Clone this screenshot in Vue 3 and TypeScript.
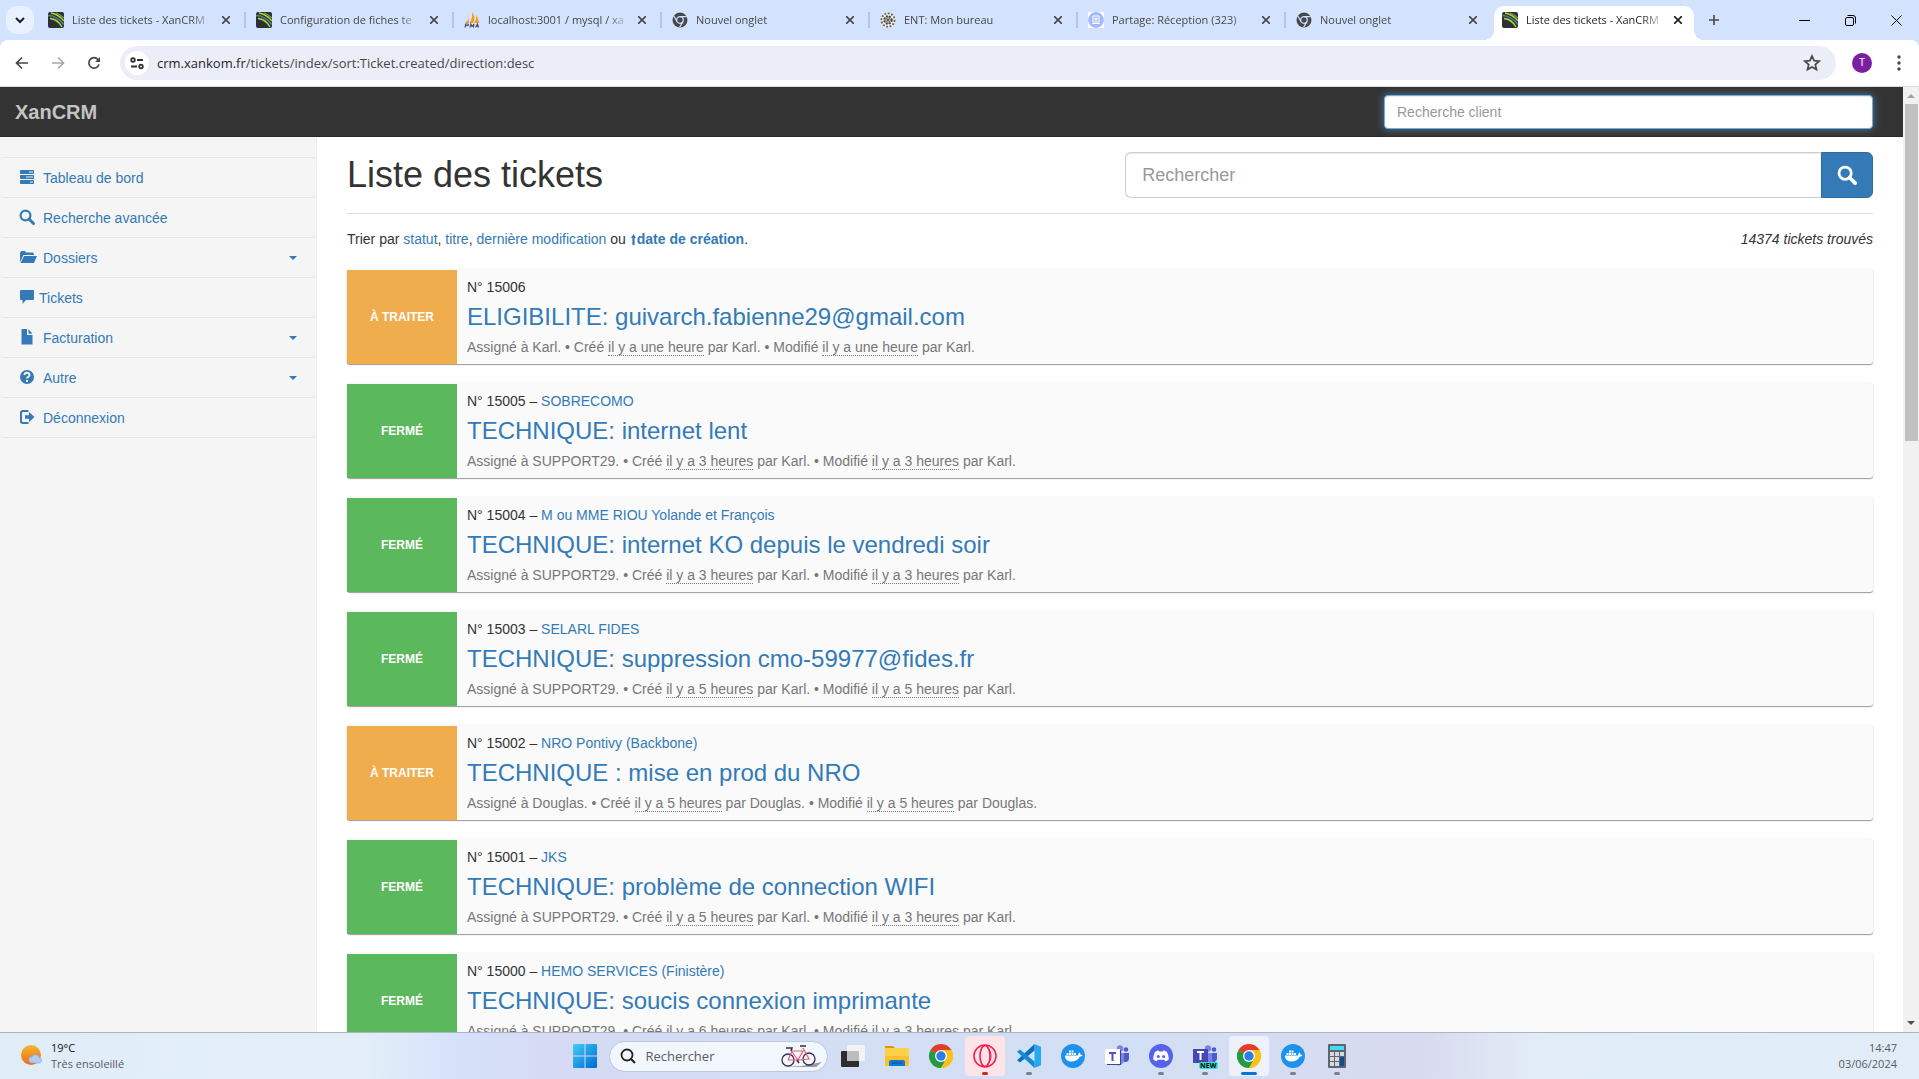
<script setup lang="ts">
import { ref } from 'vue'

interface Tab { title: string; icon: string; active?: boolean }
interface NavItem { label: string; icon: string; menu?: boolean; tight?: boolean }
interface Ticket {
  id: number
  open?: boolean
  client?: string
  title: string
  assignee: string
  author: string
  created: string
  modified: string
}
interface Task { name: string; icon: string; state?: 'run' | 'focus' | 'alert' }

const tabs: Tab[] = [
  { title: 'Liste des tickets - XanCRM', icon: 'xan' },
  { title: 'Configuration de fiches te', icon: 'xan' },
  { title: 'localhost:3001 / mysql / xa', icon: 'pma' },
  { title: 'Nouvel onglet', icon: 'chromeGrey' },
  { title: 'ENT: Mon bureau', icon: 'ent' },
  { title: 'Partage: Réception (323)', icon: 'share' },
  { title: 'Nouvel onglet', icon: 'chromeGrey' },
  { title: 'Liste des tickets - XanCRM', icon: 'xan', active: true },
]

const nav: NavItem[] = [
  { label: 'Tableau de bord', icon: 'tasks' },
  { label: 'Recherche avancée', icon: 'search' },
  { label: 'Dossiers', icon: 'folder', menu: true },
  { label: 'Tickets', icon: 'comment', tight: true },
  { label: 'Facturation', icon: 'file', menu: true },
  { label: 'Autre', icon: 'help', menu: true },
  { label: 'Déconnexion', icon: 'logout' },
]

const tickets: Ticket[] = [
  { id: 15006, open: true, title: 'ELIGIBILITE: guivarch.fabienne29@gmail.com', assignee: 'Karl', author: 'Karl', created: 'il y a une heure', modified: 'il y a une heure' },
  { id: 15005, client: 'SOBRECOMO', title: 'TECHNIQUE: internet lent', assignee: 'SUPPORT29', author: 'Karl', created: 'il y a 3 heures', modified: 'il y a 3 heures' },
  { id: 15004, client: 'M ou MME RIOU Yolande et François', title: 'TECHNIQUE: internet KO depuis le vendredi soir', assignee: 'SUPPORT29', author: 'Karl', created: 'il y a 3 heures', modified: 'il y a 3 heures' },
  { id: 15003, client: 'SELARL FIDES', title: 'TECHNIQUE: suppression cmo-59977@fides.fr', assignee: 'SUPPORT29', author: 'Karl', created: 'il y a 5 heures', modified: 'il y a 5 heures' },
  { id: 15002, open: true, client: 'NRO Pontivy (Backbone)', title: 'TECHNIQUE : mise en prod du NRO', assignee: 'Douglas', author: 'Douglas', created: 'il y a 5 heures', modified: 'il y a 5 heures' },
  { id: 15001, client: 'JKS', title: 'TECHNIQUE: problème de connection WIFI', assignee: 'SUPPORT29', author: 'Karl', created: 'il y a 5 heures', modified: 'il y a 3 heures' },
  { id: 15000, client: 'HEMO SERVICES (Finistère)', title: 'TECHNIQUE: soucis connexion imprimante', assignee: 'SUPPORT29', author: 'Karl', created: 'il y a 6 heures', modified: 'il y a 3 heures' },
]

const tasks: Task[] = [
  { name: 'Vue des tâches', icon: 'taskview' },
  { name: 'Explorateur', icon: 'explorer' },
  { name: 'Chrome', icon: 'chrome' },
  { name: 'Opera GX', icon: 'opera', state: 'alert' },
  { name: 'VS Code', icon: 'vscode', state: 'run' },
  { name: 'Docker', icon: 'docker' },
  { name: 'Teams', icon: 'teams' },
  { name: 'Discord', icon: 'discord', state: 'run' },
  { name: 'Teams (nouveau)', icon: 'teamsNew', state: 'run' },
  { name: 'Chrome', icon: 'chrome', state: 'focus' },
  { name: 'Docker Desktop', icon: 'docker', state: 'run' },
  { name: 'Calculatrice', icon: 'calc', state: 'run' },
]

const clientQuery = ref('')
const ticketQuery = ref('')
const url = { host: 'crm.xankom.fr', path: '/tickets/index/sort:Ticket.created/direction:desc' }

// Page and favicon glyphs: 16-unit grid. Taskbar glyphs: 24-unit grid.
const small: Record<string, string> = {
  xan: '<rect width="16" height="16" rx="2" fill="#2d3035"/><path d="M0 3.500c6 0 11 3 16 9" stroke="#3d8793" stroke-width="1.600" fill="none"/><path d="M3 1c5 1 9 3 13 8M2 6.500c5 .5 9 3 12 8.500" stroke="#c3d82f" stroke-width="1.300" fill="none"/><path d="M8 1c3 1 6 3 8 5" stroke="#6bab4c" stroke-width="1.200" fill="none"/>',
  pma: '<path d="M4 2c1 3 1 6-3 9h4zM8 0c3 4 3 8 1 11H5.500C8 8 8.500 4 8 0zM12 3c2 3 2 5 3.500 8H10c2-2 2.500-5 2-8z" fill="#f89c0e"/><path d="M1 15.500l.7-3.500h1.800c1.400 0 .9 1.800-.4 1.800H2M6 15.500l.8-3.500 1.200 2.500 2-2.500-.6 3.500M11.500 15.500l2-3.500 1 3.500M12.200 14.300h2" stroke="#49476e" fill="none" stroke-width="1.100"/>',
  chromeGrey: '<circle cx="8" cy="8" r="7.500" fill="#45484d"/><circle cx="8" cy="8" r="3.300" fill="none" stroke="#d3e3fd" stroke-width="1.200"/><path d="M8 4.700h6.700M5.100 9.600L1.900 4M10.900 9.600l-3.300 5.700" stroke="#d3e3fd" stroke-width="1.200"/>',
  ent: '<circle cx="8" cy="8" r="7.500" fill="#f4f4f2"/><circle cx="8" cy="8" r="6.600" fill="none" stroke="#6c6558" stroke-width="1.800" stroke-dasharray="2 1.400"/><circle cx="8" cy="8" r="3.700" fill="none" stroke="#3f3c38" stroke-width="2" stroke-dasharray="1.800 1.200"/><path d="M5.500 5.500l5 5M10.500 5.500l-5 5M8 4v8M4 8h8" stroke="#4c4740" stroke-width=".8"/>',
  share: '<rect width="16" height="16" fill="#fff"/><circle cx="8" cy="8" r="7.900" fill="#a3b7ff"/><path d="M5 4h6v6H5zM4 11.500h8M7 6h2v2H7z" fill="none" stroke="#fff"/>',
  tasks: '<path fill-rule="evenodd" d="M1.700 1h12.600a.7.7 0 0 1 .7.700v2.600a.7.7 0 0 1-.7.700H1.700a.7.7 0 0 1-.7-.7V1.700a.7.7 0 0 1 .7-.7zM10 2.400v1.200h4V2.400zM1.700 6h12.600a.7.7 0 0 1 .7.700v2.600a.7.7 0 0 1-.7.700H1.700a.7.7 0 0 1-.7-.7V6.700a.7.7 0 0 1 .7-.7zM7 7.400v1.200h7V7.400zM1.700 11h12.600a.7.7 0 0 1 .7.700v2.600a.7.7 0 0 1-.7.700H1.700a.7.7 0 0 1-.7-.7v-2.600a.7.7 0 0 1 .7-.7zM11 12.400v1.200h3v-1.200z"/>',
  search: '<circle cx="6.500" cy="6.500" r="4.900" fill="none" stroke="currentColor" stroke-width="2.200"/><path d="M10 10l4.500 4.500" stroke="currentColor" stroke-width="3" stroke-linecap="round"/>',
  folder: '<path d="M1 13V3.500L2.500 2H6l1.200 1.500H14L15 5v1H4.500z"/><path d="M5 7h13L15 14H1.500z"/>',
  comment: '<path d="M2 1h12a1 1 0 0 1 1 1v8a1 1 0 0 1-1 1H7l-3.500 4V11H2a1 1 0 0 1-1-1V2a1 1 0 0 1 1-1z"/>',
  file: '<path d="M2.500 0H8v6h5.500v9.500h-11z"/><path d="M9.500.3V4.700H13.500z"/>',
  help: '<circle cx="8" cy="8" r="7"/><path d="M5.500 6c.2-3.200 5.200-3 5 .1C10.400 7.800 8 7.700 8 9.500M8 11v2" stroke="#f5f5f5" stroke-width="2" fill="none"/>',
  logout: '<path d="M9.500 2H4a2 2 0 0 0-2 2v8a2 2 0 0 0 2 2h5.500" fill="none" stroke="currentColor" stroke-width="2"/><path d="M6 6.300h4V3l5.500 5-5.500 5V9.700H6z"/>',
}

const chromeArt = '<circle cx="12" cy="12" r="12" fill="#fbc116"/><path d="M12 12L1.600 6A12 12 0 0 1 22.400 6z" fill="#e33b2e"/><path d="M1.600 6A12 12 0 0 0 12 24l5.200-9L12 12z" fill="#229a48"/><path d="M12 6h10.400A12 12 0 0 1 12 24l5.200-9z" fill="#fbc116"/><circle cx="12" cy="12" r="6" fill="#fff"/><circle cx="12" cy="12" r="4.700" fill="#2b7de9"/>'
const people = '<circle cx="15" cy="4.500" r="3.200" fill="#7b83eb"/><circle cx="21" cy="5.500" r="2.300" fill="#5059c9"/><path d="M18 9h6v6a3.500 3.500 0 0 1-6 2z" fill="#5059c9"/><path d="M9 9h10v7a5.500 5.500 0 0 1-10 3z" fill="#7b83eb"/>'
const large: Record<string, string> = {
  taskview: '<rect x="0" y="7" width="18" height="16" rx="1" fill="#2d2d2d"/><rect x="6" y="1" width="18" height="16" rx="1" fill="#f3f3f3"/><path d="M6 7h12v10H6z" fill="#bdbdbd"/>',
  explorer: '<path d="M0 3a1 1 0 0 1 1-1h7l3 3H0z" fill="#d99a00"/><rect y="4" width="24" height="18" rx="1" fill="#ffcf48"/><path d="M0 12h24v9a1 1 0 0 1-1 1H1a1 1 0 0 1-1-1z" fill="#fbc02d"/><path d="M4 22v-4a2 2 0 0 1 2-2h12a2 2 0 0 1 2 2v4z" fill="#0f78d4"/><path d="M7 19h10" stroke="#0b5ca8" stroke-width="1.500"/>',
  chrome: chromeArt,
  opera: '<circle cx="12" cy="12" r="11" fill="none" stroke="#fa1e4e" stroke-width="1.600"/><ellipse cx="12" cy="12" rx="5" ry="10.500" fill="none" stroke="#fa1e4e" stroke-width="1.600"/><path d="M15 4c4 4 4 12 0 16" fill="none" stroke="#fa1e4e"/>',
  vscode: '<path d="M17.500 0L24 2.800v18.400L17.500 24z" fill="#27a9ef"/><path d="M17.500 0v6.500L3 18.500 0 16.300z" fill="#0a72bb"/><path d="M17.500 24v-6.500L3 5.500 0 7.700z" fill="#168bd5"/>',
  docker: '<circle cx="12" cy="12" r="12" fill="#1d91ee"/><path d="M4 11.500h13c.2-1.600.8-2.500 1.500-3 .8.700 1 1.500.8 2.200.8-.1 1.600 0 2.200.4-.5 1.100-1.400 1.600-2.700 1.500C17.500 15.500 15 17.500 11 17.500c-4.500 0-7-2-7-6z" fill="#fff"/><path d="M5.500 9h2v2h-2zM8 9h2v2H8zM10.500 9h2v2h-2zM13 9h2v2h-2zM8 6.500h2v2H8zM10.500 6.500h2v2h-2z" fill="#fff"/>',
  teams: people + '<rect x="0" y="5" width="15" height="15" fill="#fff"/><path d="M15 6v14H2v1h14V6z" fill="#3d4496"/><path d="M4 9h7M7.500 9v8" stroke="#4b53bc" stroke-width="2"/>',
  discord: '<circle cx="12" cy="12" r="12" fill="#5562ea"/><path d="M6 8c1.500-1.200 3-1.600 3.600-1.600l.6 1h3.600l.6-1c.6 0 2.100.4 3.600 1.600 1.300 2.500 1.800 5 1.700 7.500-1.200 1-2.500 1.500-3.500 1.700l-.9-1.500H8.700l-.9 1.500c-1-.2-2.300-.7-3.500-1.700C4.200 13 4.700 10.500 6 8z" fill="#fff"/><circle cx="9.300" cy="12.400" r="1.500" fill="#5562ea"/><circle cx="14.700" cy="12.400" r="1.500" fill="#5562ea"/>',
  teamsNew: people + '<rect x="0" y="5" width="15" height="14" fill="#4348b5"/><path d="M4 8h7M7.500 8v8" stroke="#fff" stroke-width="2"/>',
  calc: '<rect x="3" y="0" width="18" height="24" rx="1" fill="#5d666e"/><rect x="5" y="2" width="14" height="4" fill="#46dcf5"/><path d="M5 8h4v4H5zM10 8h4v4h-4zM5 13h4v4H5zM10 13h4v4h-4zM5 18h4v4H5zM10 18h4v4h-4zM15 8h4v4h-4z" fill="#d5d9dc"/><path d="M15 13h4v9h-4z" fill="#0f4c91"/>',
}
</script>

<template>
  <div class="screen">
    <header class="tabstrip">
      <button class="tab-search" aria-label="Rechercher dans les onglets">
        <svg width="10" height="10" viewBox="0 0 10 10"><path d="M1 3l4 4 4-4" fill="none" stroke="#1f1f1f" stroke-width="2" /></svg>
      </button>
      <div v-for="(tab, i) in tabs" :key="i" class="tab" :class="{ active: tab.active, before: i === tabs.length - 2 }">
        <svg class="favicon" viewBox="0 0 16 16" v-html="small[tab.icon]"></svg>
        <span class="tab-title">{{ tab.title }}</span>
        <button class="tab-close" aria-label="Fermer">
          <svg width="8" height="8" viewBox="0 0 8 8"><path d="M0 0l8 8M8 0L0 8" stroke="currentColor" stroke-width="1.600" /></svg>
        </button>
      </div>
      <button class="new-tab" aria-label="Nouvel onglet">
        <svg width="12" height="12" viewBox="0 0 12 12"><path d="M6 1v10M1 6h10" stroke="#474747" stroke-width="1.600" /></svg>
      </button>
      <div class="window-controls">
        <button aria-label="Réduire"><svg width="11" height="11" viewBox="0 0 11 11"><path d="M0 5.500h11" stroke="#000" /></svg></button>
        <button aria-label="Restaurer"><svg width="11" height="11" viewBox="0 0 11 11"><rect x=".5" y="2.500" width="8" height="8" rx="1.500" fill="none" stroke="#000" /><path d="M2.500.5H8a2.500 2.500 0 0 1 2.500 2.500v5.500" fill="none" stroke="#000" /></svg></button>
        <button aria-label="Fermer la fenêtre"><svg width="11" height="11" viewBox="0 0 11 11"><path d="M.5.5l10 10M10.500.5l-10 10" stroke="#000" /></svg></button>
      </div>
    </header>

    <div class="toolbar-back">
      <div class="toolbar">
        <button class="tool" aria-label="Précédent"><svg width="16" height="16" viewBox="0 0 16 16"><path d="M14 8H2.500M8 2.500L2.500 8 8 13.500" fill="none" stroke="#474747" stroke-width="1.700" /></svg></button>
        <button class="tool" aria-label="Suivant"><svg width="16" height="16" viewBox="0 0 16 16"><path d="M2 8h11.500M8 2.500L13.500 8 8 13.500" fill="none" stroke="#ababab" stroke-width="1.700" /></svg></button>
        <button class="tool" aria-label="Actualiser"><svg width="16" height="16" viewBox="0 0 16 16"><path d="M13 9.500A5.200 5.200 0 1 1 12 4.500L13.500 6" fill="none" stroke="#474747" stroke-width="1.700" /><path d="M14 2v5H9z" fill="#474747" /></svg></button>
        <div class="omnibox">
          <span class="site-info">
            <svg width="14" height="14" viewBox="0 0 14 14" fill="none" stroke="#303030" stroke-width="1.800"><circle cx="3" cy="4" r="1.800" /><path d="M7 4h6M1 10.500h6" /><circle cx="11" cy="10.500" r="1.800" /></svg>
          </span>
          <span class="url">{{ url.host }}<span class="url-path">{{ url.path }}</span></span>
          <svg class="star" width="18" height="18" viewBox="0 0 18 18"><path d="M9 2l2.100 4.700 5.100.5-3.900 3.400 1.200 5L9 13l-4.500 2.600 1.200-5L1.800 7.200l5.100-.5z" fill="none" stroke="#474747" stroke-width="1.700" /></svg>
        </div>
        <span class="avatar">T</span>
        <button class="kebab" aria-label="Menu"><svg width="4" height="16" viewBox="0 0 4 16" fill="#474747"><circle cx="2" cy="2" r="1.700" /><circle cx="2" cy="8" r="1.700" /><circle cx="2" cy="14" r="1.700" /></svg></button>
      </div>
    </div>

    <div class="viewport">
      <div class="page">
        <div class="navbar">
          <a class="brand" href="#">XanCRM</a>
          <input v-model="clientQuery" class="client-search" type="text" placeholder="Recherche client" aria-label="Recherche client" />
        </div>
        <div class="columns">
          <nav class="sidebar">
            <a v-for="item in nav" :key="item.label" href="#" class="nav-item" :class="{ tight: item.tight }">
              <svg class="glyph" viewBox="0 0 16 16" v-html="small[item.icon]"></svg>
              <span>{{ item.label }}</span>
              <i v-if="item.menu" class="caret"></i>
            </a>
          </nav>
          <main class="content">
            <div class="page-header">
              <h1>Liste des tickets</h1>
              <form class="ticket-search" @submit.prevent>
                <input v-model="ticketQuery" type="text" placeholder="Rechercher" aria-label="Rechercher" />
                <button type="submit" aria-label="Lancer la recherche"><svg width="20" height="20" viewBox="0 0 16 16" v-html="small.search"></svg></button>
              </form>
            </div>
            <div class="sort-row">
              <span>Trier par <a href="#">statut</a>, <a href="#">titre</a>, <a href="#">dernière modification</a> ou <a href="#" class="sorted"><svg class="up" width="7" height="11" viewBox="0 0 7 11"><path d="M3.500 0L6 4H4.600v7H2.400V4H1z" fill="currentColor" /></svg>date de création</a>.</span>
              <em>14374 tickets trouvés</em>
            </div>
            <div class="tickets">
              <article v-for="t in tickets" :key="t.id" class="ticket">
                <div class="status" :class="t.open ? 'warning' : 'success'">{{ t.open ? 'À TRAITER' : 'FERMÉ' }}</div>
                <div class="body">
                  <div class="number">N° {{ t.id }}<template v-if="t.client"> – <a href="#">{{ t.client }}</a></template></div>
                  <h3><a href="#">{{ t.title }}</a></h3>
                  <div class="meta">Assigné à {{ t.assignee }}. • Créé <abbr>{{ t.created }}</abbr> par {{ t.author }}. • Modifié <abbr>{{ t.modified }}</abbr> par {{ t.author }}.</div>
                </div>
              </article>
            </div>
          </main>
        </div>
      </div>
      <div class="scrollbar">
        <svg width="8" height="4" viewBox="0 0 8 4"><path d="M0 4l4-4 4 4z" fill="#a3a3a3" /></svg>
        <div class="track"><div class="thumb"></div></div>
        <svg width="8" height="4" viewBox="0 0 8 4"><path d="M0 0l4 4 4-4z" fill="#505050" /></svg>
      </div>
    </div>

    <footer class="taskbar">
      <div class="weather">
        <svg width="24" height="24" viewBox="0 0 24 24">
          <defs><linearGradient id="sun" x1="0" y1="0" x2="0" y2="1"><stop offset="0" stop-color="#efb92d" /><stop offset="1" stop-color="#f26a1b" /></linearGradient></defs>
          <circle cx="11" cy="11" r="10" fill="url(#sun)" />
          <path d="M12 19a3.200 3.200 0 0 1 0-6.400 4 4 0 0 1 7.400 1 2.800 2.800 0 0 1 0 5.400z" fill="#b4cbf5" stroke="#7f9fe0" stroke-width=".6" />
        </svg>
        <div><div class="temp">19°C</div><div class="sky">Très ensoleillé</div></div>
      </div>
      <div class="apps">
        <button class="app" aria-label="Démarrer">
          <svg width="24" height="24" viewBox="0 0 24 24">
            <defs><linearGradient id="win" x1="0" y1="0" x2="1" y2="1"><stop offset="0" stop-color="#43cdfa" /><stop offset="1" stop-color="#0069cf" /></linearGradient></defs>
            <path d="M1 0h10.500v11.500H0V1a1 1 0 0 1 1-1zM12.500 0H23a1 1 0 0 1 1 1v10.500H12.500zM0 12.500h11.500V24H1a1 1 0 0 1-1-1zM12.500 12.500H24V23a1 1 0 0 1-1 1H12.500z" fill="url(#win)" />
          </svg>
        </button>
        <button class="search-pill">
          <svg width="16" height="16" viewBox="0 0 16 16" fill="none" stroke="#222" stroke-width="1.800"><circle cx="7" cy="7" r="5.500" /><path d="M11 11l4 4" stroke-width="2.200" /></svg>
          <span>Rechercher</span>
          <svg width="42" height="24" viewBox="0 0 42 24" fill="none">
            <path d="M2 23l20-1 20-4-6 5z" fill="#9a9aa0" />
            <circle cx="8" cy="16" r="6" stroke="#34305d" stroke-width="1.300" /><circle cx="29" cy="15" r="6" stroke="#34305d" stroke-width="1.300" />
            <path d="M8 16l4-9h11l-5 9-6-8M18 16l11-1-6-11M18 16H8" stroke="#e8606b" stroke-width="1.200" />
            <path d="M6 4h6l-1 3M20 2h6M17 16l2 3" stroke="#2f2c50" stroke-width="1.500" />
          </svg>
        </button>
        <button v-for="(task, i) in tasks" :key="i" class="app" :class="task.state" :aria-label="task.name">
          <svg width="24" height="24" viewBox="0 0 24 24" v-html="large[task.icon]"></svg>
          <span v-if="task.icon === 'teamsNew'" class="new-badge">NEW</span>
        </button>
      </div>
      <div class="clock"><div>14:47</div><div>03/06/2024</div></div>
    </footer>
  </div>
</template>

<style>
html, body { margin: 0; height: 100%; overflow: hidden; }
#app { height: 100%; }
</style>

<style scoped>
* { box-sizing: border-box; }
button { border: 0; padding: 0; margin: 0; background: none; font: inherit; color: inherit; display: flex; align-items: center; justify-content: center; }
.screen { height: 100vh; display: flex; flex-direction: column; background: #fff; color: #333; font: 14px/20px "Liberation Sans", Arial, sans-serif; }
svg { flex: none; }

.tabstrip { flex: none; height: 40px; display: flex; align-items: center; background: #d3e3fd; font: 11px/16px "Open Sans", sans-serif; color: #474747; }
.tab-search { flex: none; width: 28px; height: 28px; margin: 0 6px; border-radius: 10px; background: #e9f1fe; }
.tab { position: relative; flex: 0 1 208px; min-width: 0; height: 34px; margin-top: 6px; padding: 0 14px 6px 8px; display: flex; align-items: center; }
.tab.before { flex-basis: 206px; padding-right: 13px; }
.tab:not(.active):not(.before)::after { content: ""; position: absolute; right: 2px; top: 6px; width: 2px; height: 16px; background: #a8c7fa; }
.favicon { width: 16px; height: 16px; margin-right: 8px; }
.tab-title { flex: 1; min-width: 0; white-space: nowrap; overflow: hidden; mask-image: linear-gradient(90deg, #000 calc(100% - 24px), transparent); margin-right: 4px; }
.tab-close { flex: none; width: 16px; height: 16px; }
.tab.active { flex-basis: 200px; padding-right: 8px; background: #fff; border-radius: 10px 10px 0 0; color: #1f1f1f; }
.tab.active::before, .tab.active::after { content: ""; position: absolute; bottom: 0; width: 10px; height: 10px; }
.tab.active::before { right: 100%; background: radial-gradient(circle at 0 0, transparent 10px, #fff 10px); }
.tab.active::after { left: 100%; background: radial-gradient(circle at 100% 0, transparent 10px, #fff 10px); }
.new-tab { flex: none; width: 28px; height: 28px; margin-left: 6px; }
.window-controls { margin-left: auto; display: flex; }
.window-controls button { width: 46px; height: 40px; }

.toolbar-back { flex: none; background: #d3e3fd; }
.toolbar { height: 47px; display: flex; align-items: center; padding: 0 8px 0 4px; background: #fff; border-radius: 8px 8px 0 0; border-bottom: 1px solid #dcdcdc; }
.tool { flex: none; width: 36px; height: 34px; }
.omnibox { flex: 1; height: 34px; margin: 0 16px 0 8px; padding: 0 15px 0 5px; display: flex; align-items: center; background: #ebeef8; border-radius: 17px; }
.site-info { width: 24px; height: 24px; border-radius: 12px; background: #fff; display: flex; align-items: center; justify-content: center; }
.url { flex: 1; margin-left: 8px; font: 13px/20px "Open Sans", sans-serif; color: #1f1f1f; }
.url-path { color: #474747; }
.avatar { width: 20px; height: 20px; border-radius: 10px; background: #7b1fa2; color: #fff; font: 10px/20px Roboto, sans-serif; text-align: center; }
.kebab { width: 24px; height: 24px; margin-left: 15px; }

.viewport { flex: 1; min-height: 0; display: flex; }
.page { flex: 1; min-width: 0; display: flex; flex-direction: column; overflow: hidden; }
a { color: #337ab7; text-decoration: none; }
.navbar { flex: none; height: 50px; padding: 0 30px 0 15px; display: flex; align-items: center; justify-content: space-between; background: #333; border-bottom: 1px solid #292929; }
.brand { font-size: 20px; font-weight: bold; color: #c4c4c4; }
.client-search { width: 489px; height: 34px; padding: 6px 12px; border: 1px solid #66afe9; border-radius: 4px; font: 14px/20px "Liberation Sans", Arial, sans-serif; color: #555; outline: 0; box-shadow: inset 0 1px 1px rgba(0, 0, 0, .08), 0 0 8px rgba(102, 175, 233, .6); }
input::placeholder { color: #999; opacity: 1; }

.columns { flex: 1; min-height: 0; display: flex; }
.sidebar { flex: none; width: 317px; padding-top: 20px; background: #f5f5f5; border-right: 1px solid #eee; }
.nav-item { height: 40px; padding: 0 19px; display: flex; align-items: center; gap: 8px; border-bottom: 1px solid #e7e7e7; border-radius: 4px; }
.nav-item:first-child { height: 41px; border-top: 1px solid #e7e7e7; }
.nav-item.tight { gap: 4px; }
.glyph { width: 16px; height: 16px; margin-bottom: 2px; fill: currentColor; overflow: visible; }
.caret { margin-left: auto; border: 4px solid transparent; border-top-color: currentColor; border-bottom: 0; }

.content { flex: 1; min-width: 0; padding: 15px 30px 0; overflow: hidden; }
.page-header { display: flex; align-items: center; justify-content: space-between; padding-bottom: 15px; border-bottom: 1px solid #ddd; }
h1 { margin: 0; font-size: 36px; line-height: 40px; font-weight: 500; }
.ticket-search { width: 49%; height: 46px; display: flex; }
.ticket-search input { flex: 1; min-width: 0; padding: 10px 16px; border: 1px solid #ccc; border-right: 0; border-radius: 6px 0 0 6px; font: 18px/24px "Liberation Sans", Arial, sans-serif; color: #555; outline: 0; box-shadow: inset 0 1px 1px rgba(0, 0, 0, .08); }
.ticket-search button { width: 52px; border: 1px solid #2e6da4; border-radius: 0 6px 6px 0; background: #337ab7; color: #fff; }
.sort-row { display: flex; justify-content: space-between; margin: 15px 0 20px; }
.sorted { font-weight: bold; }
.up { vertical-align: -1px; }

.tickets { display: flex; flex-direction: column; gap: 19px; }
.ticket { display: flex; height: 95px; border-top: 1px solid #fafafa; border-radius: 3px; background: #fafafa; box-shadow: 0 1px 1px #999, 0 0 2px rgba(0, 0, 0, .1); }
.status { flex: none; width: 110px; display: flex; align-items: center; justify-content: center; color: #fff; font-size: 12px; font-weight: bold; }
.warning { background: #f0ad4e; }
.success { background: #5cb85c; }
.body { padding: 7px 10px; }
h3 { margin: 6px 0 7px; font-size: 24px; line-height: 27px; font-weight: 500; }
.meta { color: #777; }
abbr { border-bottom: 1px dotted #777; text-decoration: none; }

.scrollbar { flex: none; width: 16px; padding: 7px 0; display: flex; flex-direction: column; align-items: center; gap: 6px; background: #f1f1f1; }
.track { flex: 1; align-self: stretch; padding: 0 1px 0 2px; }
.thumb { height: 37%; background: #c1c1c1; }

.taskbar { flex: none; height: 47px; display: flex; align-items: center; border-top: 1px solid #adb5c2; background: linear-gradient(90deg, #e1edf6, #e3eef9 19%, #d5e1fa 24%, #d6daf4 29%, #d3def5 40%, #d3dff4 60%, #d8daef 74%, #e2ecf7 80%, #dfedf9 88%, #e2ecf7); font: 11px/16px "Open Sans", sans-serif; }
.weather { flex: 1; display: flex; align-items: center; gap: 7px; padding-left: 20px; }
.temp { color: #111; }
.sky, .clock { color: #555b63; }
.apps { display: flex; align-items: center; padding-left: 4px; }
.app { position: relative; width: 40px; height: 40px; margin: 0 2px; border-radius: 4px; }
.app svg { overflow: visible; }
.search-pill { width: 219px; height: 31px; margin: 0 3px 0 2px; padding: 0 5px 0 10px; gap: 10px; border: 1px solid #bcc8de; border-radius: 16px; background: #f2f6fd; color: #5a5c60; font: 13px/20px "Open Sans", sans-serif; }
.search-pill span { flex: 1; text-align: left; }
.alert { background: #fde4e8; }
.focus { background: #edf1fb; }
.run::after, .alert::after, .focus::after { content: ""; position: absolute; left: 50%; bottom: 1px; width: 6px; height: 3px; margin-left: -3px; border-radius: 2px; background: #7c818b; }
.alert::after { background: #c42b1c; }
.focus::after { width: 16px; margin-left: -8px; background: #0078d4; }
.new-badge { position: absolute; right: 7px; bottom: 7px; padding: 0 1px; border-radius: 2px; background: #2fe0dc; color: #000; font: bold 7px/7px "Open Sans", sans-serif; }
.clock { flex: 1; padding-right: 22px; text-align: right; }
</style>
